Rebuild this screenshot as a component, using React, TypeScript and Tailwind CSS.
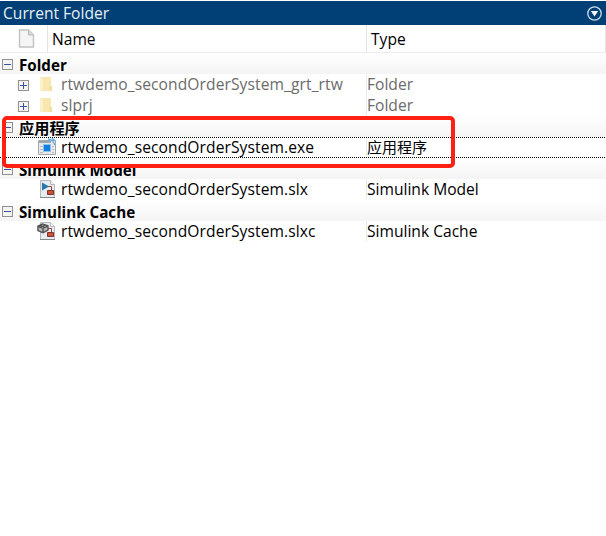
import React from "react";

type Kind = "folder" | "exe" | "slx" | "slxc";

function Toggle({ open, className = "" }: { open: boolean; className?: string }) {
  return (
    <svg className={`shrink-0 ${className}`} width="11" height="11" viewBox="0 0 11 11" shapeRendering="crispEdges">
      <rect x=".5" y=".5" width="10" height="10" fill="#f4f4f4" stroke="#919191" />
      <path d="M2 5.5h7" stroke="#3c539c" />
      {!open && <path d="M5.5 2v7" stroke="#3c539c" />}
    </svg>
  );
}

function PageIcon() {
  return (
    <svg width="17" height="19" viewBox="0 0 17 19">
      <path d="M1.5 1h9l5 5v12h-14z" fill="#f5f5f5" stroke="#c2c2c2" strokeWidth="1.4" />
      <path d="M10.5 1v5h5" fill="#d8d8d8" stroke="#b8b8b8" />
    </svg>
  );
}

function FileIcon({ kind }: { kind: Kind }) {
  return (
    <svg className="shrink-0" width="20" height="21" viewBox="0 0 20 21">
      {kind === "folder" && (
        <>
          <path d="M3 3h11v9h1v5H3z" fill="#f9e7b0" />
          <path d="M3 3l3 2v13l-3-2z" fill="#fcf0cc" />
          <path d="M12 12h3v5h-3z" fill="#f3dfa2" />
        </>
      )}
      {kind === "exe" && (
        <>
          <path d="M1.5 3.5h17v14h-17z" fill="#e9e9e7" stroke="#a0a8ad" />
          <path d="M2 4h12v2H2z" fill="#9aa6af" />
          <path d="M3 9h3v1H3zM3 12h3v1H3zM3 15h3v1H3zM15 9h2v1h-2zM15 12h2v1h-2zM15 15h2v1h-2z" fill="#b4babe" />
          <path d="M6.5 7.5h7v7h-7z" fill="#0f7fe3" stroke="#8cc4ef" />
          <path d="M11 2l4 1 3 5M15 1l3 3" stroke="#62b0e8" strokeWidth="1.4" fill="none" />
        </>
      )}
      {(kind === "slx" || kind === "slxc") && (
        <>
          <path d="M3.5 1.5h10l4 4v13h-14z" fill="#e6ecf2" stroke="#b4b8bc" />
          <path d="M3 18.5h15" stroke="#888" />
          <path d="M13.5 1.5v4h4" fill="#f6f7f8" stroke="#b4b8bc" />
          <path d="M10 7.5h4.5V12" stroke="#a0422e" fill="none" />
          <path d="M10.5 11.5h6v4h-6z" fill="#cf5238" stroke="#7e3325" />
        </>
      )}
      {kind === "slx" && <path d="M5 3.5l7 4-7 4z" fill="#2678a9" />}
      {kind === "slxc" && (
        <path
          d="M.9 5.2L5.5 3 11 4.8v4.4L6 11.8 .9 9.5zM1 5.3L6 7.3l5-2.5M6 7.3v4.2M3 4.3l4.5 2M8.5 4L3.5 6.3"
          fill="#b5b5b5"
          stroke="#505050"
          strokeWidth="1.3"
        />
      )}
    </svg>
  );
}

function Group({ children }: { children: React.ReactNode }) {
  return (
    <div className="flex h-[21px] items-start bg-gradient-to-b from-white to-[#f4f4f4] pl-[2px]">
      <Toggle open className="mt-[6px]" />
      <span className="mt-[2px] ml-[6px] text-[15.2px] leading-[21px] font-bold text-black">{children}</span>
    </div>
  );
}

function Row({ kind, name, type, selected = false }: { kind: Kind; name: string; type: string; selected?: boolean }) {
  const folder = kind === "folder";
  return (
    <div className={`relative flex h-[21px] ${folder ? "text-[#6b6b6b]" : "text-black"}`}>
      <div className="flex w-[367px] items-start border-r border-[#ebebeb]">
        <div className="flex w-[37px] shrink-0 pt-[6px] pl-[18px]">{folder && <Toggle open={false} />}</div>
        <FileIcon kind={kind} />
        <span className="ml-[4px] leading-[21px] tracking-[0.09px]">{name}</span>
      </div>
      <span className={kind === "exe" ? "text-[15px] leading-[21px]" : "leading-[21px]"}>{type}</span>
      {selected && (
        <svg className="absolute inset-0" width="606" height="21" shapeRendering="crispEdges">
          <path d="M0 .5h606M0 20.5h606" stroke="#000" strokeDasharray="1 1" />
        </svg>
      )}
    </div>
  );
}

export default function App() {
  return (
    <div className="relative h-[536px] w-[606px] overflow-hidden bg-white pt-px font-['Open_Sans','Noto_Sans_CJK_SC',sans-serif] text-[15.6px] whitespace-nowrap">
      <div className="flex h-6 items-center justify-between bg-[#004077] pr-[4px] pl-[3px] text-[#e8eef3]">
        <span className="leading-6">Current Folder</span>
        <svg width="15" height="15" viewBox="0 0 15 15">
          <circle cx="7.5" cy="7.5" r="6.7" fill="none" stroke="#cfdce6" strokeWidth="1.3" />
          <path d="M3.8 5h7.4l-3.7 5.5z" fill="#f4f7f9" />
        </svg>
      </div>
      <div className="flex h-7 border-b border-[#ebebeb] text-black">
        <div className="flex w-[48px] items-center border-r border-[#e4e4e4] pl-[18px]">
          <PageIcon />
        </div>
        <div className="w-[319px] border-r border-[#e4e4e4] pl-[4px] leading-[29px]">Name</div>
        <div className="flex-1 border-r border-[#e4e4e4] pl-[4px] leading-[29px]">Type</div>
      </div>
      <Group>Folder</Group>
      <Row kind="folder" name="rtwdemo_secondOrderSystem_grt_rtw" type="Folder" />
      <Row kind="folder" name="slprj" type="Folder" />
      <Group>应用程序</Group>
      <Row kind="exe" name="rtwdemo_secondOrderSystem.exe" type="应用程序" selected />
      <Group>Simulink Model</Group>
      <Row kind="slx" name="rtwdemo_secondOrderSystem.slx" type="Simulink Model" />
      <Group>Simulink Cache</Group>
      <Row kind="slxc" name="rtwdemo_secondOrderSystem.slxc" type="Simulink Cache" />
      <div className="absolute top-[115.5px] left-[2px] h-[52px] w-[453px] rounded-[5px] border-4 border-[#ff2014]" />
    </div>
  );
}
